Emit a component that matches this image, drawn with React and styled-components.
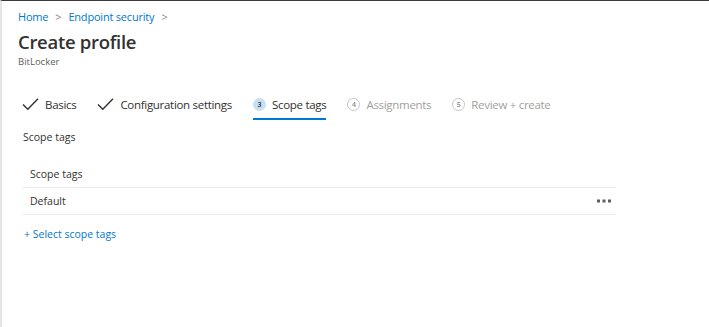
import React from "react";
import styled, { createGlobalStyle } from "styled-components";

const Global = createGlobalStyle`
  html, body { margin: 0; padding: 0; background: #fff; }
  body { font-family: "Open Sans", "Noto Sans", sans-serif; color: #323130; }
`;

const Page = styled.div`
  box-sizing: border-box;
  width: 709px;
  height: 327px;
  border-top: 1px solid #3b3b3b;
  border-left: 2px solid #e6e6e6;
  padding: 7px 0 0 16px;
`;

const Crumbs = styled.nav`
  display: flex;
  align-items: center;
  gap: 5px;
  font-size: 11px;
  letter-spacing: -0.2px;
  color: #0078d4;
  height: 16px;
`;

const Sep = styled.span`
  color: #8a8886;
  font-size: 11px;
  margin: 0 2px;
`;

const Title = styled.h1`
  margin: 7px 0 0;
  font-size: 18.5px;
  font-weight: 600;
  letter-spacing: -0.3px;
  line-height: 22px;
`;

const Sub = styled.div`
  font-size: 9.5px;
  line-height: 13px;
  color: #605e5c;
  margin-top: 2px;
`;

const Steps = styled.div`
  display: flex;
  align-items: stretch;
  gap: 21px;
  margin-top: 22px;
  padding-left: 4px;
`;

const Step = styled.div`
  display: flex;
  align-items: center;
  gap: 6px;
  height: 28px;
  font-size: 11.5px;
  color: ${(p) => (p.$todo ? "#a19f9d" : "#323130")};
  border-bottom: 2px solid ${(p) => (p.$active ? "#0078d4" : "transparent")};
  letter-spacing: -0.3px;
`;

const Num = styled.span`
  box-sizing: border-box;
  width: 13px;
  height: 13px;
  border-radius: 50%;
  display: inline-flex;
  align-items: center;
  justify-content: center;
  font-size: 7px;
  font-weight: 600;
  letter-spacing: 0;
  color: ${(p) => (p.$active ? "#323130" : "#8a8886")};
  background: ${(p) => (p.$active ? "#c7e0f4" : "#fff")};
  border: 1px solid ${(p) => (p.$active ? "#c7e0f4" : "#c8c6c4")};
`;

const Body = styled.section`
  padding-left: 5px;
  width: 593px;
`;

const Label = styled.div`
  font-size: 10.5px;
  margin-top: 10px;
`;

const Table = styled.div`
  margin-top: 17px;
`;

const Row = styled.div`
  display: flex;
  align-items: center;
  justify-content: space-between;
  height: 26px;
  padding: 0 5px 0 7px;
  font-size: 10.5px;
  line-height: 14px;
  border-bottom: 1px solid #edebe9;
`;

const Link = styled.a`
  display: block;
  margin-top: 12px;
  padding-left: 1px;
  font-size: 10.5px;
  color: #0078d4;
`;

const Check = () => (
  <svg width="17" height="14" viewBox="0 0 17 14">
    <path d="M1 7.5 L5.8 12.3 L16 1.8" fill="none" stroke="#323130" strokeWidth="1.4" />
  </svg>
);

const Dots = () => (
  <svg width="14" height="4" viewBox="0 0 14 4">
    <rect x="0" y="0.5" width="3" height="3" fill="#605e5c" />
    <rect x="5.5" y="0.5" width="3" height="3" fill="#605e5c" />
    <rect x="11" y="0.5" width="3" height="3" fill="#605e5c" />
  </svg>
);

export default function App() {
  return (
    <>
      <Global />
      <Page>
        <Crumbs>
          <span>Home</span>
          <Sep>&gt;</Sep>
          <span>Endpoint security</span>
          <Sep>&gt;</Sep>
        </Crumbs>
        <Title>Create profile</Title>
        <Sub>BitLocker</Sub>
        <Steps>
          <Step><Check />Basics</Step>
          <Step><Check />Configuration settings</Step>
          <Step $active><Num $active>3</Num>Scope tags</Step>
          <Step $todo><Num>4</Num>Assignments</Step>
          <Step $todo><Num>5</Num>Review + create</Step>
        </Steps>
        <Body>
          <Label>Scope tags</Label>
          <Table>
            <Row>Scope tags</Row>
            <Row>Default<Dots /></Row>
          </Table>
          <Link>+ Select scope tags</Link>
        </Body>
      </Page>
    </>
  );
}
